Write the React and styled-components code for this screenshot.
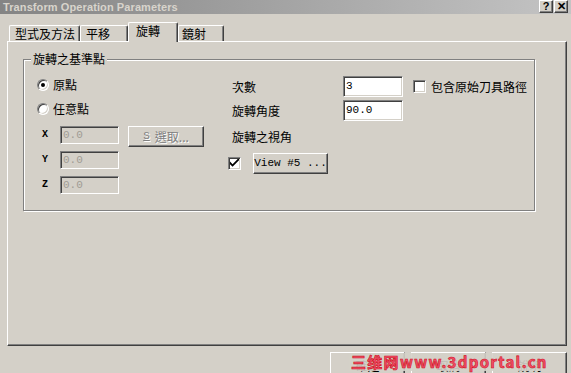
import React from "react";
import styled, { createGlobalStyle } from "styled-components";

const Global = createGlobalStyle`
  html, body { margin: 0; padding: 0; background: #d4d0c8; }
  body { font-family: "Noto Sans CJK TC", "Noto Sans", sans-serif; font-size: 12px; color: #000; }
  * { box-sizing: border-box; }
`;

const Window = styled.div`
  position: relative;
  width: 571px;
  height: 373px;
  overflow: hidden;
  background: #d4d0c8;
`;

const TitleBar = styled.div`
  height: 14px;
  display: flex;
  justify-content: space-between;
  background: linear-gradient(to right, #848484, #c4c4c4);
`;

const Title = styled.div`
  padding-left: 3px;
  font: bold 11px/14px "Liberation Sans", Arial, sans-serif;
  color: #d8d4cc;
  letter-spacing: 0.1px;
`;

const TitleButtons = styled.div`
  display: flex;
  gap: 1px;
  margin-right: 3px;
`;

const TitleBtn = styled.div`
  width: 14px;
  height: 13px;
  background: #d4d0c8;
  border: 1px solid;
  border-color: #fff #404040 #404040 #fff;
  box-shadow: inset -1px -1px 0 #808080;
  display: flex;
  align-items: center;
  justify-content: center;
  font: bold 11px/1 "Liberation Sans", Arial, sans-serif;
  color: #000;
`;

const Content = styled.div`
  padding: 8px 4px 0 7px;
`;

const TabRow = styled.div`
  height: 19px;
  display: flex;
  align-items: flex-end;
  padding-left: 2px;
`;

const Tab = styled.div`
  position: relative;
  width: ${(p) => p.$w}px;
  height: ${(p) => (p.$active ? 20 : 16)}px;
  margin-bottom: ${(p) => (p.$active ? -1 : 0)}px;
  z-index: ${(p) => (p.$active ? 2 : 0)};
  background: #d4d0c8;
  border-top: 1px solid #fff;
  border-left: 1px solid #fff;
  border-right: 1px solid #404040;
  border-radius: 2px 2px 0 0;
  box-shadow: inset -1px 0 0 #808080;
  display: flex;
  align-items: ${(p) => (p.$active ? "flex-start" : "center")};
  padding-top: ${(p) => (p.$active ? 1 : 0)}px;
  padding-left: ${(p) => p.$pl}px;
  font-size: 12px;
  line-height: 14px;
`;

const Panel = styled.div`
  width: 560px;
  height: 305px;
  border: 1px solid;
  border-color: #fff #404040 #404040 #fff;
  box-shadow: inset -1px -1px 0 #808080;
  padding: 17px 0 0 15px;
`;

const GroupBox = styled.div`
  position: relative;
  width: 512px;
  height: 152px;
  border: 1px solid #808080;
  box-shadow: inset 1px 1px 0 #fff, 1px 1px 0 #fff;
  padding: 15px 0 0 13px;
  display: flex;
`;

const Legend = styled.span`
  position: absolute;
  top: -8px;
  left: 7px;
  padding: 0 2px;
  background: #d4d0c8;
  font-size: 12px;
  line-height: 14px;
`;

const LeftCol = styled.div`
  width: 191px;
  display: flex;
  flex-direction: column;
`;

const RadioRow = styled.div`
  height: 20px;
  display: flex;
  align-items: center;
  gap: 4px;
  margin-top: ${(p) => p.$mt || 0}px;
`;

const Radio = styled.span`
  position: relative;
  width: 12px;
  height: 12px;
  border-radius: 50%;
  background: #fff;
  border: 1px solid;
  border-color: #808080 #fff #fff #808080;
  box-shadow: inset 1px 1px 0 #404040, inset -1px -1px 0 #d4d0c8;
  display: flex;
  align-items: center;
  justify-content: center;
  &::after {
    content: "";
    width: 4px;
    height: 4px;
    border-radius: 50%;
    background: ${(p) => (p.$on ? "#000" : "transparent")};
  }
`;

const Text = styled.span`
  font-size: 12px;
  line-height: 14px;
  white-space: nowrap;
`;

const CoordGrid = styled.div`
  margin-top: 7px;
  display: grid;
  grid-template-columns: 23px 59px auto;
  grid-template-rows: repeat(3, 18px);
  row-gap: 7px;
  align-items: center;
`;

const Axis = styled.span`
  padding-left: 5px;
  font: bold 10px/1 "Liberation Mono", "Courier New", monospace;
`;

const Field = styled.div`
  width: ${(p) => p.$w}px;
  height: ${(p) => p.$h}px;
  background: ${(p) => (p.$disabled ? "#d4d0c8" : "#fff")};
  border: 1px solid;
  border-color: #808080 #fff #fff #808080;
  box-shadow: inset 1px 1px 0 #404040, inset -1px -1px 0 #d4d0c8;
  padding: 0 0 0 2px;
  display: flex;
  align-items: center;
  font: 11px/1 "Liberation Mono", "Courier New", monospace;
  color: ${(p) => (p.$disabled ? "#a09c94" : "#000")};
`;

const Button = styled.div`
  width: ${(p) => p.$w}px;
  height: ${(p) => p.$h || 21}px;
  margin-left: ${(p) => p.$ml || 0}px;
  align-self: start;
  background: #d4d0c8;
  border: 1px solid;
  border-color: #fff #404040 #404040 #fff;
  box-shadow: inset -1px -1px 0 #808080;
  display: flex;
  align-items: center;
  justify-content: center;
  gap: 5px;
  font-size: 12px;
  line-height: 14px;
  color: ${(p) => (p.$disabled ? "#808080" : "#000")};
  text-shadow: ${(p) => (p.$disabled ? "1px 1px 0 #fff" : "none")};
  white-space: nowrap;
`;

const Mono = styled.span`
  font: 11px/1 "Liberation Mono", "Courier New", monospace;
  text-decoration: ${(p) => (p.$u ? "underline" : "none")};
`;

const RightCol = styled.div`
  display: flex;
  flex-direction: column;
  margin-top: 1px;
`;

const Row = styled.div`
  display: flex;
  align-items: center;
  height: ${(p) => p.$h}px;
  margin-top: ${(p) => p.$mt || 0}px;
`;

const Label = styled.span`
  width: 115px;
  padding-left: 4px;
  font-size: 12px;
  line-height: 14px;
`;

const Check = styled.span`
  width: 13px;
  height: 13px;
  margin-left: ${(p) => p.$ml || 0}px;
  margin-right: ${(p) => p.$mr || 0}px;
  background: #fff;
  border: 1px solid;
  border-color: #808080 #fff #fff #808080;
  box-shadow: inset 1px 1px 0 #404040, inset -1px -1px 0 #d4d0c8;
  display: flex;
  align-items: center;
  justify-content: center;
`;

const ButtonRow = styled.div`
  margin-top: 6px;
  display: flex;
  justify-content: flex-end;
  gap: 6px;
`;

const BottomLabel = styled.span`
  padding-top: 4px;
  font-size: 12px;
  line-height: 14px;
`;

const Watermark = styled.div`
  position: absolute;
  left: 349px;
  top: 353px;
  padding: 0 2px;
  height: 18px;
  display: flex;
  align-items: center;
  background: rgba(212, 208, 200, 0.9);
  font: bold 15px/16px "Noto Sans CJK SC", "DejaVu Sans", sans-serif;
  color: #f0506a;
  -webkit-text-stroke: 0.6px #d01020;
  letter-spacing: 1.3px;
  white-space: nowrap;
  pointer-events: none;
`;

const CheckMark = () => (
  <svg width="9" height="9" viewBox="0 0 7 7">
    <path d="M0 2 L0 4 L2 6 L7 1 L7 -1 L2 4 Z" fill="#000" />
  </svg>
);

export default function App() {
  return (
    <Window>
      <Global />
      <TitleBar>
        <Title>Transform Operation Parameters</Title>
        <TitleButtons>
          <TitleBtn>?</TitleBtn>
          <TitleBtn>✕</TitleBtn>
        </TitleButtons>
      </TitleBar>
      <Content>
        <TabRow>
          <Tab $w={71} $pl={5}>型式及方法</Tab>
          <Tab $w={48} $pl={5}>平移</Tab>
          <Tab $w={50} $pl={7} $active>旋轉</Tab>
          <Tab $w={46} $pl={3}>鏡射</Tab>
        </TabRow>
        <Panel>
          <GroupBox>
            <Legend>旋轉之基準點</Legend>
            <LeftCol>
              <RadioRow>
                <Radio $on />
                <Text>原點</Text>
              </RadioRow>
              <RadioRow $mt={4}>
                <Radio />
                <Text>任意點</Text>
              </RadioRow>
              <CoordGrid>
                <Axis>X</Axis>
                <Field $w={59} $h={18} $disabled>0.0</Field>
                <Button $w={76} $ml={9} $disabled>
                  <Mono $u>S</Mono>
                  <span>選取...</span>
                </Button>
                <Axis>Y</Axis>
                <Field $w={59} $h={18} $disabled>0.0</Field>
                <span />
                <Axis>Z</Axis>
                <Field $w={59} $h={18} $disabled>0.0</Field>
                <span />
              </CoordGrid>
            </LeftCol>
            <RightCol>
              <Row $h={21}>
                <Label>次數</Label>
                <Field $w={60} $h={21}>3</Field>
                <Check $ml={10} $mr={5} />
                <Text>包含原始刀具路徑</Text>
              </Row>
              <Row $h={21} $mt={3}>
                <Label>旋轉角度</Label>
                <Field $w={60} $h={21}>90.0</Field>
              </Row>
              <Row $h={20} $mt={6}>
                <Label>旋轉之視角</Label>
              </Row>
              <Row $h={21} $mt={6}>
                <Check $mr={12}>
                  <CheckMark />
                </Check>
                <Button $w={75}>
                  <Mono>View #5 ...</Mono>
                </Button>
              </Row>
            </RightCol>
          </GroupBox>
        </Panel>
        <ButtonRow>
          <Button $w={75} $h={23}><BottomLabel>確定</BottomLabel></Button>
          <Button $w={75} $h={23}><BottomLabel>取消</BottomLabel></Button>
          <Button $w={75} $h={23}><BottomLabel>說明</BottomLabel></Button>
        </ButtonRow>
      </Content>
      <Watermark>三维网www.3dportal.cn</Watermark>
    </Window>
  );
}
